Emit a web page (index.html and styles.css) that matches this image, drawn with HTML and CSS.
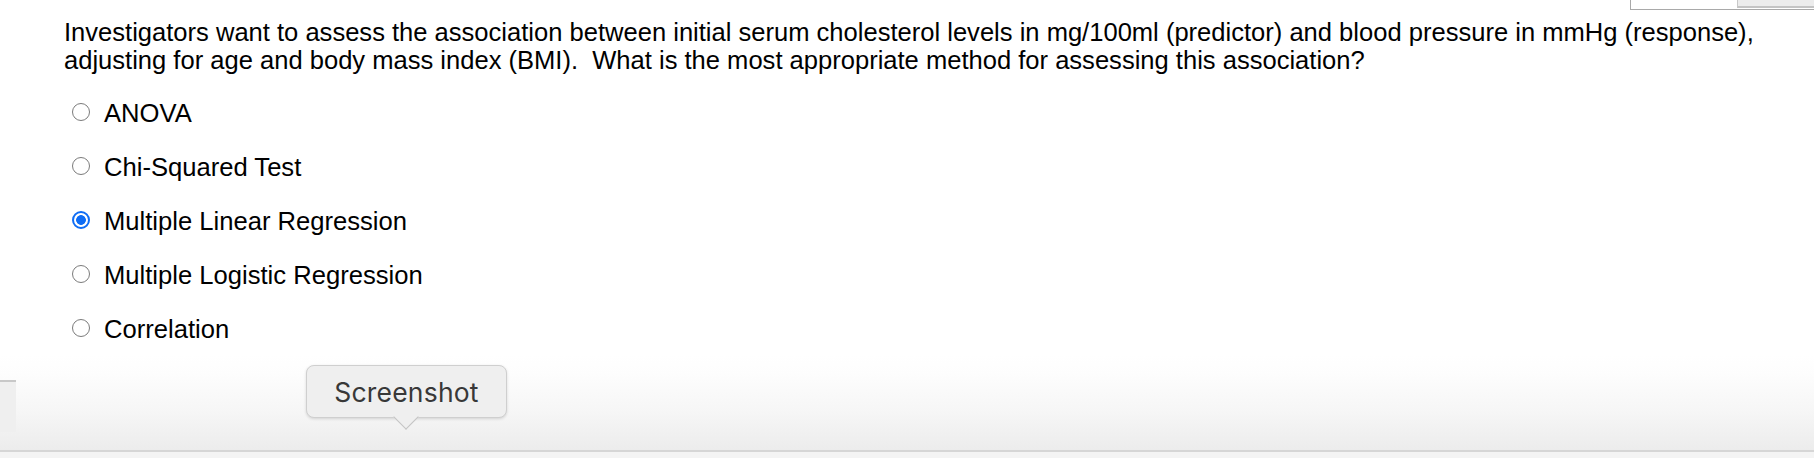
FILE: index.html
```html
<!DOCTYPE html>
<html>
<head>
<meta charset="utf-8">
<link rel="stylesheet" href="styles.css">
</head>
<body>
<div class="page">
  <div class="corner-box"><div class="corner-inner"></div></div>
  <main class="content">
    <p class="question">Investigators want to assess the association between initial serum cholesterol levels in mg/100ml (predictor) and blood pressure in mmHg (response), adjusting for age and body mass index (BMI).&nbsp; What is the most appropriate method for assessing this association?</p>
    <ul class="options">
      <li class="option"><span class="radio"></span><span class="label">ANOVA</span></li>
      <li class="option"><span class="radio"></span><span class="label">Chi-Squared Test</span></li>
      <li class="option"><span class="radio checked"></span><span class="label">Multiple Linear Regression</span></li>
      <li class="option"><span class="radio"></span><span class="label">Multiple Logistic Regression</span></li>
      <li class="option"><span class="radio"></span><span class="label">Correlation</span></li>
    </ul>
  </main>
  <footer class="toolbar">
    <div class="left-tab"></div>
    <div class="tooltip">Screenshot</div>
  </footer>
  <div class="strip"></div>
</div>
</body>
</html>
```
FILE: styles.css
```css
html, body {
  margin: 0;
  padding: 0;
  background: #ffffff;
}
.page {
  position: relative;
  width: 1814px;
  height: 458px;
  display: flex;
  flex-direction: column;
  overflow: hidden;
  font-family: "Liberation Sans", Arial, sans-serif;
  color: #000;
}
.corner-box {
  position: absolute;
  top: -2px;
  left: 1630px;
  right: -2px;
  height: 12px;
  border: 1px solid #a9a9a9;
  background: #fff;
  box-sizing: border-box;
}
.corner-inner {
  position: absolute;
  left: 106px;
  right: 0;
  top: 0;
  bottom: 1px;
  background: #ececec;
  border-bottom: 2px solid #c4c4c4;
  border-left: 1px solid #c8c8c8;
}
.content {
  flex: 1;
  padding: 18px 40px 0 64px;
}
.question {
  margin: 0;
  font-size: 25.55px;
  line-height: 28px;
}
.options {
  list-style: none;
  margin: 11px 0 0 0;
  padding: 0 0 0 8px;
}
.option {
  height: 54px;
  display: flex;
  align-items: center;
}
.radio {
  width: 18px;
  height: 18px;
  border-radius: 50%;
  border: 1.5px solid #7b7b7b;
  box-sizing: border-box;
  background: #fff;
  margin-right: 14px;
  flex: none;
}
.radio.checked {
  border: 2px solid #0f6df5;
  background: radial-gradient(circle, #0f6df5 0 4.5px, #fff 5.2px);
}
.label {
  font-size: 25.6px;
  line-height: 30px;
  position: relative;
  top: 1px;
}
.toolbar {
  position: relative;
  height: 95px;
  flex: none;
  background: linear-gradient(#ffffff 0%, #fdfdfd 20%, #f6f6f6 60%, #ececec 100%);
  border-bottom: 2px solid #d6d6d6;
}
.left-tab {
  position: absolute;
  left: 0;
  top: 25px;
  width: 16px;
  height: 52px;
  background: #efefef;
  border-top: 2px solid #c8c8c8;
  box-sizing: border-box;
}
.tooltip {
  position: absolute;
  left: 306px;
  top: 10px;
  width: 201px;
  height: 53px;
  box-sizing: border-box;
  background: #efefef;
  border: 1px solid #cfcfcf;
  border-radius: 8px;
  box-shadow: 0 1px 3px rgba(0, 0, 0, 0.14);
  font-family: Inter, "Noto Sans", sans-serif;
  font-size: 26.5px;
  color: #383838;
  display: flex;
  align-items: center;
  justify-content: center;
  letter-spacing: 0.2px;
}
.tooltip::after {
  content: "";
  position: absolute;
  left: 90px;
  top: 42px;
  width: 17px;
  height: 17px;
  background: #efefef;
  border-right: 1px solid #c4c4c4;
  border-bottom: 1px solid #c4c4c4;
  transform: rotate(45deg);
}
.strip {
  flex: 1;
  background: #f4f4f4;
}
```
